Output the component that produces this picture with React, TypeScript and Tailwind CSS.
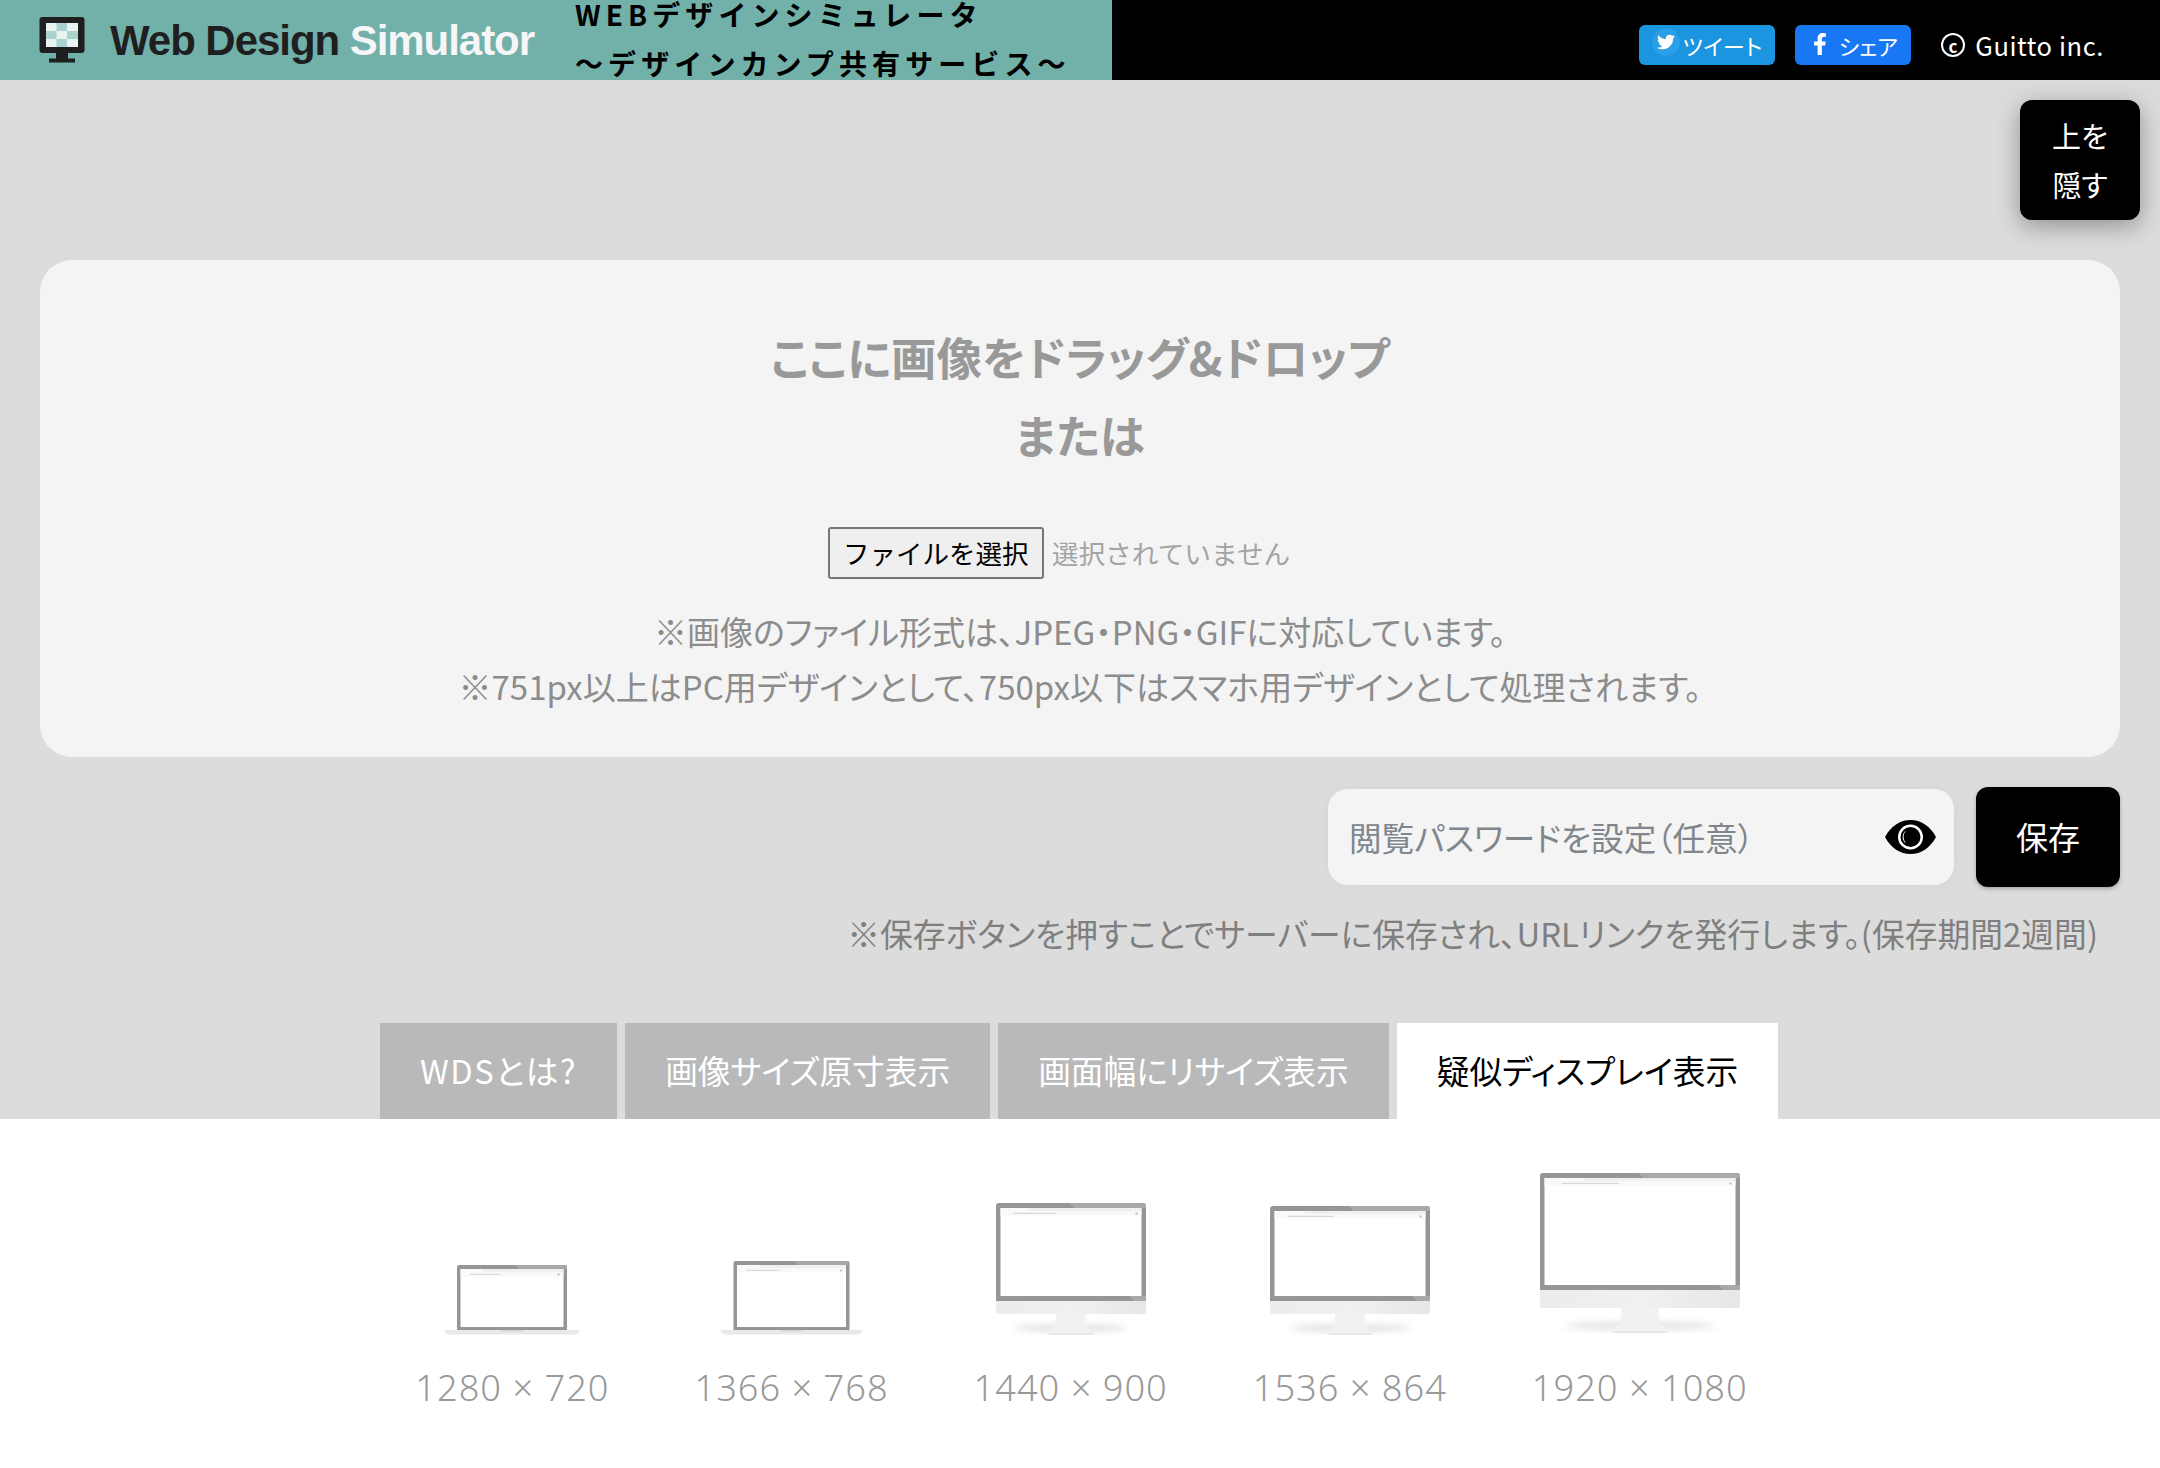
import React from "react";
import { FaTwitter, FaFacebookF } from "react-icons/fa";

function Browser({ x, y, w, h }: { x: number; y: number; w: number; h: number }) {
  return (
    <g>
      <rect x={x} y={y} width={w} height={h} fill="#ffffff" />
      <rect x={x} y={y} width={w} height={3.5} fill="#eef0f1" />
      <rect x={x + 0.5} y={y} width={w * 0.2} height={3.5} fill="#fafafa" />
      <rect x={x} y={y + 3.5} width={w} height={4} fill="#f8f9f9" />
      <rect x={x + w * 0.09} y={y + 4.8} width={w * 0.3} height={1} fill="#d0d2d4" />
      <rect x={x + w - 6} y={y + 4.5} width={2} height={2} fill="#bcbec0" />
    </g>
  );
}

function Laptop({ w, h, base }: { w: number; h: number; base: number }) {
  const x = (base - w) / 2;
  return (
    <svg width={base} height={h + 5} viewBox={`0 0 ${base} ${h + 5}`} className="block">
      <path d={`M${x} ${h}V2a2 2 0 0 1 2-2H${x + w - 2}a2 2 0 0 1 2 2V${h}Z`} fill="#969696" />
      <path d={`M${x + w * 0.53} 0H${x + w - 2}a2 2 0 0 1 2 2V4H${x + w * 0.56}Z`} fill="#a8a8a8" />
      <Browser x={x + 3.5} y={4} w={w - 7} h={h - 7} />
      <path d={`M0 ${h}H${base}V${h + 1.5}Q${base} ${h + 4} ${base - 6} ${h + 4}H6Q0 ${h + 4} 0 ${h + 1.5}Z`} fill="#e8e8e8" />
      <rect x={base / 2 - 11} y={h} width={22} height={1.3} fill="#d4d4d4" />
      <rect x={3} y={h + 4} width={base - 6} height={1} fill="#f4f4f4" />
    </svg>
  );
}

function Monitor({ id, w, bezel, chin, stand, neck, foot }: { id: string; w: number; bezel: number; chin: number; stand: number; neck: number; foot: number }) {
  const total = bezel + chin + stand;
  const cx = w / 2;
  const top = bezel + chin;
  return (
    <svg width={w} height={total} viewBox={`0 0 ${w} ${total}`} className="block">
      <defs>
        <filter id={id} x="-30%" y="-200%" width="160%" height="500%">
          <feGaussianBlur stdDeviation="3.5" />
        </filter>
        <linearGradient id={`${id}c`} x1="0" x2="1" y1="0" y2="0">
          <stop offset="0" stopColor="#ececec" />
          <stop offset="0.5" stopColor="#f0f0f0" />
          <stop offset="1" stopColor="#e6e7e7" />
        </linearGradient>
      </defs>
      <ellipse cx={cx} cy={total - 7} rx={w * 0.38} ry={3.5} fill="#dedede" filter={`url(#${id})`} />
      <path d={`M0 ${bezel}V3a3 3 0 0 1 3-3H${w - 3}a3 3 0 0 1 3 3V${bezel}Z`} fill="#969696" />
      <path d={`M${w * 0.49} 0H${w - 3}a3 3 0 0 1 3 3V5H${w * 0.52}Z`} fill="#a9a9a9" />
      <path d={`M${w * 0.92} ${bezel}L${w * 0.89} ${bezel - 5}H${w}V${bezel}Z`} fill="#a9a9a9" />
      <Browser x={4.5} y={5} w={w - 9} h={bezel - 10} />
      <path d={`M0 ${bezel}H${w}V${top - 3}a3 3 0 0 1-3 3H3a3 3 0 0 1-3-3Z`} fill={`url(#${id}c)`} />
      <path d={`M${cx - neck / 2} ${top}H${cx + neck / 2}C${cx + neck / 2} ${top + stand * 0.5} ${cx + neck / 2 + 2} ${total - 7} ${cx + foot / 2} ${total - 3}V${total - 2}Q${cx + foot / 2} ${total} ${cx + foot / 2 - 3} ${total}H${cx - foot / 2 + 3}Q${cx - foot / 2} ${total} ${cx - foot / 2} ${total - 2}V${total - 3}C${cx - neck / 2 - 2} ${total - 7} ${cx - neck / 2} ${top + stand * 0.5} ${cx - neck / 2} ${top}Z`} fill="#f1f1f1" />
      <rect x={cx - foot / 2 + 2} y={total - 1.5} width={foot - 4} height={1.5} fill="#e4e4e4" />
    </svg>
  );
}

const devices = [
  { label: "1280 × 720", el: <Laptop w={110} h={65} base={134} /> },
  { label: "1366 × 768", el: <Laptop w={116} h={69} base={141} /> },
  { label: "1440 × 900", el: <Monitor id="m1" w={150} bezel={98} chin={13} stand={21} neck={29} foot={47} /> },
  { label: "1536 × 864", el: <Monitor id="m2" w={160} bezel={95} chin={13} stand={21} neck={30} foot={46} /> },
  { label: "1920 × 1080", el: <div className="pb-[2px]"><Monitor id="m3" w={200} bezel={117} chin={18} stand={25} neck={37} foot={57} /></div> },
];

export default function App() {
  return (
    <div className="relative flex min-h-screen flex-col bg-white font-['Noto_Sans_CJK_JP',sans-serif] [font-feature-settings:'palt']">
      <header className="flex h-20 items-stretch bg-black">
        <div className="flex w-[1112px] items-center bg-[#72b0aa]">
          <svg width="46" height="46" viewBox="0 0 46 46" className="ml-[39px] shrink-0">
            <rect x="0.5" y="0" width="45" height="36" rx="3" fill="#1f1f1f" />
            <rect x="17" y="36" width="12" height="6" fill="#1f1f1f" />
            <rect x="10" y="41.5" width="26" height="4" fill="#1f1f1f" />
            <rect x="7" y="6" width="32" height="24" fill="#a9d3cf" />
            <rect x="7" y="6" width="10.5" height="8" fill="#e8f3f2" />
            <rect x="28" y="6" width="11" height="8" fill="#e8f3f2" />
            <rect x="17.5" y="14" width="10.5" height="8" fill="#e8f3f2" />
            <rect x="7" y="22" width="10.5" height="8" fill="#e8f3f2" />
            <rect x="28" y="22" width="11" height="8" fill="#e8f3f2" />
          </svg>
          <div className="ml-[25px] w-[430px] shrink-0 whitespace-nowrap font-['Liberation_Sans',sans-serif] text-[42px] font-bold tracking-[-1.05px] text-[#1f1f1f]">
            Web Design <span className="text-[#f6f6f6]">Simulator</span>
          </div>
          <div className="ml-[35px] flex flex-col gap-[21px] pb-[3px] text-[28px] leading-[28px] font-bold tracking-[5.1px] whitespace-nowrap text-black [font-feature-settings:normal]">
            <div>WEBデザインシミュレータ</div>
            <div>～デザインカンプ共有サービス～</div>
          </div>
        </div>
        <div className="flex flex-1 items-center justify-end pt-[10px] pr-[56px] text-white">
          <div className="flex h-10 w-[136px] items-center justify-center gap-[3px] rounded-md bg-[#1b95e0] text-[22px]">
            <span className="flex h-7 w-7 -translate-y-[3px] items-center justify-center rounded-full bg-[#2a9ee6]">
              <FaTwitter className="text-[18px]" />
            </span>
            <span className="tracking-[0.5px]">ツイート</span>
          </div>
          <div className="ml-5 flex h-10 w-[116px] items-center justify-center gap-[8px] rounded-md bg-[#1877f2] text-[22px]">
            <FaFacebookF className="-translate-y-[1px] text-[22px]" />
            <span>シェア</span>
          </div>
          <div className="ml-[30px] flex items-center gap-[10px] text-[25.5px] tracking-[0.6px]">
            <span className="flex h-[24px] w-[24px] items-center justify-center rounded-full border-2 border-white text-[17px] leading-none font-bold">c</span>
            <span>Guitto inc.</span>
          </div>
        </div>
      </header>

      <button className="absolute top-[100px] right-5 flex h-[120px] w-[120px] flex-col items-center justify-center rounded-xl bg-black text-[29px] leading-[49px] text-white shadow-[0_6px_24px_rgba(0,0,0,0.35)]">
        <span>上を</span>
        <span>隠す</span>
      </button>

      <main className="flex flex-col bg-[#dcdcdc] pt-[180px]">
        <section className="mx-10 flex h-[497px] flex-col items-center rounded-[32px] bg-[#f4f4f4] pt-[57px]">
          <div className="text-center text-[45.5px] leading-[78px] font-bold text-[#999999]">
            <div>ここに画像をドラッグ&amp;ドロップ</div>
            <div>または</div>
          </div>
          <div className="mt-[54px] mr-[42px] flex items-center [font-feature-settings:normal]">
            <span className="flex h-[52px] w-[216px] items-center justify-center rounded-[3px] border-2 border-[#767676] bg-[#efefef] text-[26.5px] text-black">ファイルを選択</span>
            <span className="ml-2 text-[26.7px] text-[#a4a4a4]">選択されていません</span>
          </div>
          <div className="mt-[25px] text-center text-[33px] leading-[55px] text-[#8c8c8c]">
            <div>※画像のファイル形式は、JPEG・PNG・GIFに対応しています。</div>
            <div>※751px以上はPC用デザインとして、750px以下はスマホ用デザインとして処理されます。</div>
          </div>
        </section>

        <div className="mx-10 mt-[30px] flex items-center justify-end gap-[22px]">
          <div className="flex h-[96px] w-[626px] items-center justify-between rounded-[20px] bg-[#f4f4f4] pr-[18px] pl-[21px] shadow-[0_0_12px_rgba(0,0,0,0.04)]">
            <span className="text-[32.6px] text-[#80868c]">閲覧パスワードを設定（任意）</span>
            <svg width="51" height="34" viewBox="0 0 51 34">
              <path d="M0 17C6 6 15 0 25.5 0S45 6 51 17C45 28 36 34 25.5 34S6 28 0 17Z" fill="#000000" />
              <circle cx="25.5" cy="17" r="12.5" fill="#ffffff" />
              <circle cx="25.5" cy="17" r="10" fill="#000000" />
              <path d="M21 10.5a8 8 0 0 0 0 13 10 10 0 0 1 0-13Z" fill="#ffffff" />
            </svg>
          </div>
          <div className="flex h-[100px] w-[144px] items-center justify-center rounded-xl bg-black pb-[2px] text-[32px] text-white shadow-[0_2px_4px_rgba(0,0,0,0.25)]">保存</div>
        </div>

        <div className="mt-[21px] pr-[62px] text-right text-[32.8px] leading-[50px] text-[#7f7f7f]">
          ※保存ボタンを押すことでサーバーに保存され、URLリンクを発行します。(保存期間2週間)
        </div>

        <nav className="mt-[65px] flex justify-center gap-2 pr-[2px]">
          <div className="flex h-[96px] items-center bg-[#b9b9b9] px-10 pb-[2px] text-[32.7px] tracking-[1.6px] whitespace-nowrap text-white">WDSとは?</div>
          <div className="flex h-[96px] items-center bg-[#b9b9b9] px-10 pb-[2px] text-[32.7px] whitespace-nowrap text-white">画像サイズ原寸表示</div>
          <div className="flex h-[96px] items-center bg-[#b9b9b9] px-10 pb-[2px] text-[32.7px] whitespace-nowrap text-white">画面幅にリサイズ表示</div>
          <div className="flex h-[96px] items-center bg-white px-10 pb-[2px] text-[32.7px] whitespace-nowrap text-black">疑似ディスプレイ表示</div>
        </nav>
      </main>

      <section className="flex flex-1 items-start justify-center bg-white pt-[54px]">
        <div className="flex items-end justify-center gap-[85px] pl-[3px]">
          {devices.map((d) => (
            <div key={d.label} className="flex flex-col items-center">
              {d.el}
              <div className="mt-[31px] font-['Noto_Sans',sans-serif] text-[36.2px] leading-[42px] font-light tracking-[1px] whitespace-nowrap text-[#999999]">{d.label}</div>
            </div>
          ))}
        </div>
      </section>
    </div>
  );
}
